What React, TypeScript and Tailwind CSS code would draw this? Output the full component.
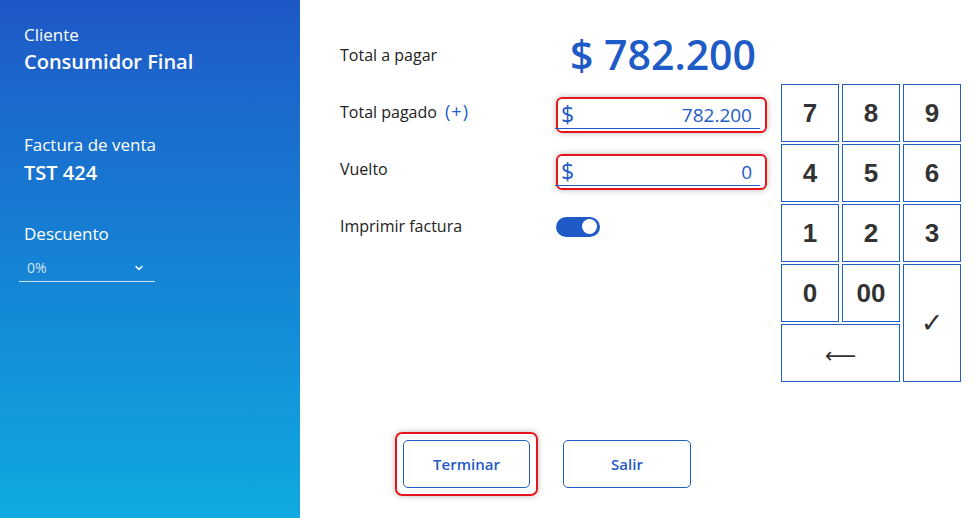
import { ChevronDown } from "lucide-react";

const keys = ["7", "8", "9", "4", "5", "6", "1", "2", "3", "0", "00"];

function MoneyInput({ value }: { value: string }) {
  return (
    <div className="mt-[6px] w-[211px] h-[36px] rounded-[6px] border-2 border-[#e8141c] shadow-[0_0_6px_rgba(0,0,0,0.28)]">
      <div className="-ml-[3px] w-[205px] h-[30px] border-b border-[#1f5bc7] flex items-end justify-between pl-[6px] pr-[8px] text-[#1f5bc7]">
        <span className="text-[23px] leading-[28px]">$</span>
        <span className="text-[19px] leading-[26px]">{value}</span>
      </div>
    </div>
  );
}

export default function App() {
  return (
    <div className="w-full h-screen flex bg-white font-['Open_Sans',sans-serif]">
      <aside className="w-[300px] h-full shrink-0 bg-linear-to-b from-[#1e58c6] to-[#10aae1] text-white pl-[24px] pt-[23px]">
        <div className="text-[17px] leading-[23px]">Cliente</div>
        <div className="mt-[2px] text-[20px] leading-[28px] font-semibold">Consumidor Final</div>
        <div className="mt-[57px] text-[17px] leading-[23px]">Factura de venta</div>
        <div className="mt-[3px] text-[20px] leading-[28px] font-semibold">TST 424</div>
        <div className="mt-[35px] text-[17px] leading-[23px]">Descuento</div>
        <div className="mt-[9px] -ml-[5px] w-[136px] h-[28px] border-b border-[#d9e2ea] flex items-center justify-between pl-[8px] pr-[10px]">
          <span className="text-[14px] text-[#d6e6f5]">0%</span>
          <ChevronDown className="w-[12px] h-[12px]" strokeWidth={3} />
        </div>
      </aside>

      <main className="flex-1 flex flex-col pl-[40px] pt-[26px] text-[#222]">
        <div className="flex items-start">
          <div className="w-[427px]">
            <div className="h-[57px] flex items-center">
              <div className="w-[216px] text-[16px]">Total a pagar</div>
              <div className="w-[211px] pl-[14px] text-[41px] leading-none font-semibold text-[#1f5bc7]">
                $ 782.200
              </div>
            </div>
            <div className="h-[57px] flex items-center">
              <div className="w-[216px] text-[16px]">
                Total pagado{" "}
                <span className="ml-[4px] text-[18px] tracking-[1px] text-[#1f5bc7]">(+)</span>
              </div>
              <MoneyInput value="782.200" />
            </div>
            <div className="h-[57px] flex items-center">
              <div className="w-[216px] text-[16px]">Vuelto</div>
              <MoneyInput value="0" />
            </div>
            <div className="h-[57px] flex items-center">
              <div className="w-[216px] text-[16px]">Imprimir factura</div>
              <div className="mt-[2px] w-[44px] h-[20px] rounded-full bg-[#1f5bc7] flex items-center justify-end pr-[3px]">
                <div className="w-[15px] h-[15px] rounded-full bg-white" />
              </div>
            </div>
          </div>

          <div className="ml-[14px] mt-[58px] grid grid-cols-[58px_58px_58px] grid-rows-[58px_58px_58px_58px_58px] gap-x-[3px] gap-y-[2px] font-['Liberation_Sans',sans-serif] text-[#333]">
            {keys.map((k) => (
              <button
                key={k}
                className="border border-[#2160c4] flex items-center justify-center text-[26px] font-bold"
              >
                {k}
              </button>
            ))}
            <button className="col-start-3 row-start-4 row-span-2 border border-[#2160c4] flex items-center justify-center text-[27px] font-['DejaVu_Sans',sans-serif]">
              ✓
            </button>
            <button className="col-span-2 border border-[#2160c4] flex items-center justify-center pt-[4px] text-[22px] font-['DejaVu_Sans',sans-serif]">
              ⟵
            </button>
          </div>
        </div>

        <div className="mt-[50px] pl-[55px] flex items-center">
          <div className="p-[6px] rounded-[7px] border-2 border-[#e8141c] shadow-[0_0_6px_rgba(0,0,0,0.28)]">
            <button className="w-[127px] h-[48px] rounded-[5px] border border-[#2160c4] text-[15px] font-semibold text-[#1f5bc7]">
              Terminar
            </button>
          </div>
          <button className="ml-[25px] w-[128px] h-[48px] rounded-[5px] border border-[#2160c4] text-[15px] font-semibold text-[#1f5bc7]">
            Salir
          </button>
        </div>
      </main>
    </div>
  );
}
